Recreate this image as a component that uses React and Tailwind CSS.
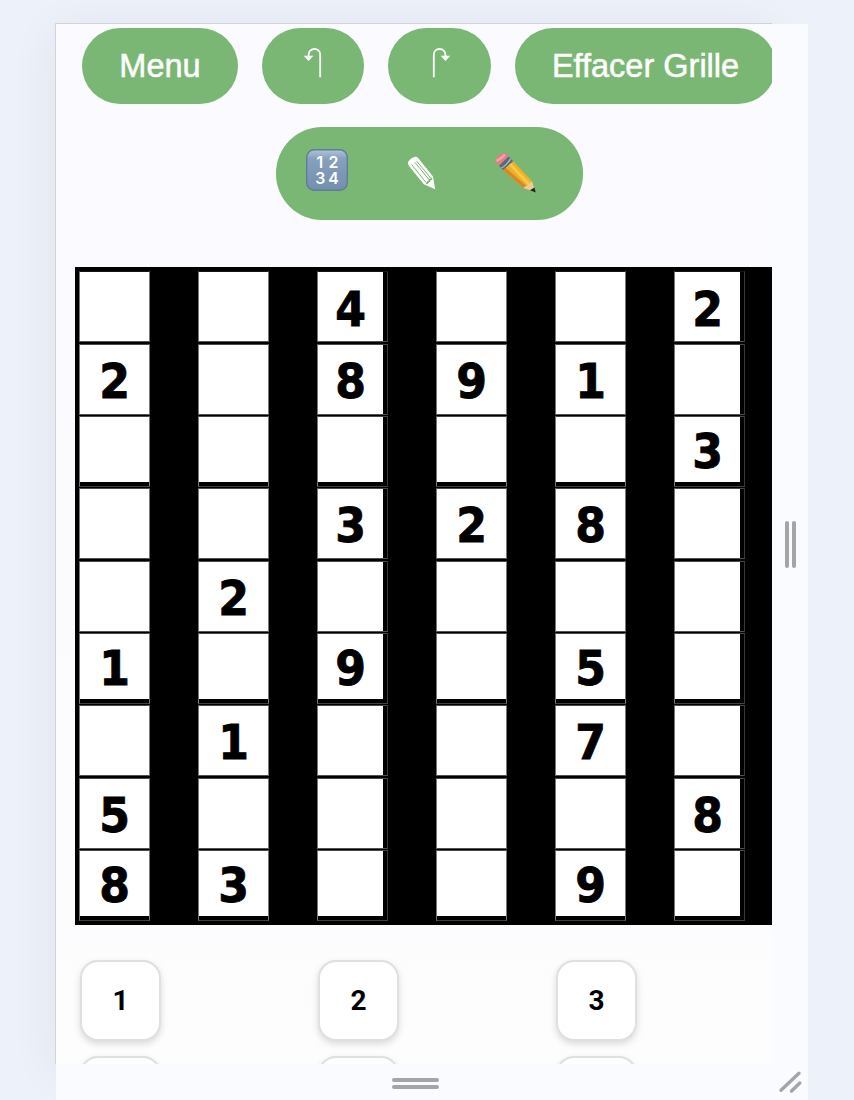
const rows = [
  ['', '', '4', '', '', '2'],
  ['2', '', '8', '9', '1', ''],
  ['', '', '', '', '', '3'],
  ['', '', '3', '2', '8', ''],
  ['', '2', '', '', '', ''],
  ['1', '', '9', '', '5', ''],
  ['', '1', '', '', '7', ''],
  ['5', '', '', '', '', '8'],
  ['8', '3', '', '', '9', ''],
];

function Cell({ value, row, col }) {
  const thickRight = col % 3 === 2;
  const thickBottom = row % 3 === 2;
  return (
    <div
      className={`h-[71px] w-[71px] border border-l-[#777] bg-black ${row === 0 ? 'border-t-[#161616]' : 'border-t-[#484848]'} ${thickRight ? 'border-r-[#383838]' : 'border-r-[#777]'} ${thickBottom ? 'border-b-[#404040]' : 'border-b-[#505050]'}`}
    >
      <div
        className={`flex items-center justify-center bg-white ${thickRight ? 'w-[65px]' : 'w-[69px]'} ${thickBottom ? 'h-[65px]' : 'h-[69px]'}`}
      >
        <span className={`block scale-x-[0.92] font-['DejaVu_Sans',sans-serif] text-[48px] leading-none font-bold text-black [-webkit-text-stroke:0.9px_black] ${row === 0 ? 'mt-1' : 'mt-[2px]'}`}>{value}</span>
      </div>
    </div>
  );
}

function Board() {
  return (
    <div className="mt-[47px] ml-[19px] grid h-[658px] w-[722px] shrink-0 grid-cols-[repeat(6,119px)] grid-rows-[73px_72px_72px_73px_72px_72px_73px_72px_71px] border-4 border-black bg-black">
      {rows.map((r, i) => r.map((v, j) => <Cell key={`${i}-${j}`} value={v} row={i} col={j} />))}
    </div>
  );
}

function HookArrow({ flip }) {
  return (
    <svg width="20" height="32" viewBox="0 0 20 32" className={flip ? 'ml-[2px] -scale-x-100' : ''} fill="none">
      <path d="M17.2 30.3V7.8C17.2 4.2 15 2 11.5 2C8 2 5.6 4.2 5.6 7.8V9" stroke="white" strokeWidth="1.8" />
      <path d="M0.8 8.8H10.4L5.4 14Z" fill="white" />
    </svg>
  );
}

function NumbersIcon() {
  return (
    <svg width="44" height="44" viewBox="0 0 44 44">
      <defs>
        <linearGradient id="tile" x1="0" y1="0" x2="0" y2="1">
          <stop offset="0" stopColor="#b2c4d8" />
          <stop offset="0.22" stopColor="#86a0be" />
          <stop offset="1" stopColor="#738fae" />
        </linearGradient>
      </defs>
      <rect x="1.7" y="1.7" width="40.6" height="40.6" rx="7.5" fill="url(#tile)" stroke="#5f7d96" strokeWidth="1.4" />
      <g fill="white" fontFamily="Inter, sans-serif" fontSize="15.8" fontWeight="600" textAnchor="middle">
        <text x="14.8" y="19.6">1</text>
        <text x="28.4" y="19.6">2</text>
        <text x="15.2" y="35.7">3</text>
        <text x="28.6" y="35.7">4</text>
      </g>
    </svg>
  );
}

function OutlinePencil() {
  return (
    <svg width="32" height="36" viewBox="0 0 32 36" fill="none">
      <path d="M2 8.5C1.2 6 7 1.2 10 1.7Q11.3 2 12.3 3.3L27 21.5L29.2 34.2L17.8 29.2L3 11Z" fill="white" />
      <path d="M5.6 9.5L20 27.4M8.8 7.1L22.8 24.4M10.4 5.8L24.6 22.9" stroke="#7bb774" strokeWidth="1" />
      <path d="M20 28Q21.8 28.8 22 26.6Q24 26.8 23.5 24.7Q25.6 25 25.7 22.8" stroke="#7bb774" strokeWidth="1.6" />
    </svg>
  );
}

function ColorPencil() {
  return (
    <svg width="44" height="44" viewBox="0 0 44 44">
      <path d="M2 10.5Q1.5 7.5 6 4T13 2.5L16.5 6L6.5 15.5Z" fill="#dc7f86" />
      <path d="M3.5 10Q8 8 12 3.5" stroke="#f2a5a8" strokeWidth="2.5" fill="none" />
      <path d="M6 14.8L15.6 5.5L20.2 10.2L10.2 19.2Z" fill="#596979" />
      <path d="M8.5 17.2Q14 14 17.5 7.8" stroke="#a9b8c5" strokeWidth="1.5" fill="none" />
      <path d="M10.2 19.2L20.2 10.2L39.2 30.5L30.8 37.3Z" fill="#f0b02a" />
      <path d="M10.2 19.2L12.8 16.8L33.5 35.1L30.8 37.3Z" fill="#d48a26" />
      <path d="M16 14L18 12.2L37 32L34.6 34Z" fill="#fbc944" />
      <path d="M30.8 37.3Q31.5 34.8 34 35Q34.5 32.3 37 32.5Q37 30.4 39.2 30.5L42.2 40.8Z" fill="#edcd91" />
      <path d="M37 39.2L41.4 36.5L42.8 41.5Z" fill="#222622" />
    </svg>
  );
}

function Key({ children }) {
  return (
    <div className="flex h-[81px] w-[81px] items-center justify-center rounded-[18px] border-2 border-[#e0e0e0] bg-white font-['Roboto',sans-serif] text-[28px] font-bold text-black shadow-[0_3px_7px_rgba(0,0,0,0.14)]">
      {children}
    </div>
  );
}

export default function App() {
  return (
    <div className="h-[1100px] w-[854px] overflow-hidden bg-[#edf1fa] pt-[23px] pl-[55px] font-['Liberation_Sans',sans-serif]">
      <div className="grid h-[1077px] w-[753px] grid-cols-[717px_36px] grid-rows-[1041px_36px]">
        <div className="h-[1041px] w-[717px] border-t border-l border-[#d2d3d6] shadow-[0_8px_44px_rgba(30,40,60,0.07)]">
          <div className="flex h-[1040px] w-[716px] flex-col overflow-hidden bg-linear-to-b from-[#fafaff] to-[#fdfdfe]">
            <div className="mt-1 ml-[26px] flex h-[76px] w-[800px] shrink-0 text-[32.5px] text-white [-webkit-text-stroke:0.5px_white]">
              <button className="mr-6 h-[76px] w-[156px] shrink-0 rounded-[38px] bg-[#7bb774]">Menu</button>
              <button aria-label="Annuler" className="mr-6 flex h-[76px] w-[102px] shrink-0 justify-center rounded-[38px] bg-[#7bb774] pt-[19px]"><HookArrow /></button>
              <button aria-label="Rétablir" className="mr-6 flex h-[76px] w-[103px] shrink-0 justify-center rounded-[38px] bg-[#7bb774] pt-[19px]"><HookArrow flip /></button>
              <button className="h-[76px] w-[261px] shrink-0 rounded-[38px] bg-[#7bb774]">Effacer Grille</button>
            </div>
            <div className="mt-[23px] ml-[220px] flex h-[93px] w-[307px] shrink-0 rounded-[46px] bg-[#7bb774] pt-[21px] pl-[29px]">
              <NumbersIcon />
              <div className="mt-[7px] ml-[57px]"><OutlinePencil /></div>
              <div className="mt-[3px] ml-[55px]"><ColorPencil /></div>
            </div>
            <Board />
            <div className="mt-[35px] ml-6 grid shrink-0 grid-cols-[repeat(3,238px)] gap-y-[15px]">
              {[1, 2, 3, 4, 5, 6].map((n) => <Key key={n}>{n > 3 ? '' : n}</Key>)}
            </div>
          </div>
        </div>
        <div className="z-10 mt-px flex items-center justify-center gap-[3px] bg-[#f9fbff]">
          <div className="h-[47px] w-1 rounded-full bg-[#a5a5a8]" />
          <div className="h-[47px] w-1 rounded-full bg-[#a5a5a8]" />
        </div>
        <div className="z-10 ml-px flex flex-col items-center justify-center gap-[3px] bg-[#f9fbff] pt-[3px] pl-[2px]">
          <div className="h-1 w-[47px] rounded-full bg-[#a5a5a8]" />
          <div className="h-1 w-[47px] rounded-full bg-[#a5a5a8]" />
        </div>
        <div className="z-10 bg-[#f9fbff] pt-[6px] pl-[6px]">
          <svg width="26" height="24" viewBox="0 0 26 24" stroke="#a5a5a8" strokeWidth="3.4" strokeLinecap="round">
            <path d="M3 20.3L21 3.2M13.5 21L21.8 13" />
          </svg>
        </div>
      </div>
    </div>
  );
}
